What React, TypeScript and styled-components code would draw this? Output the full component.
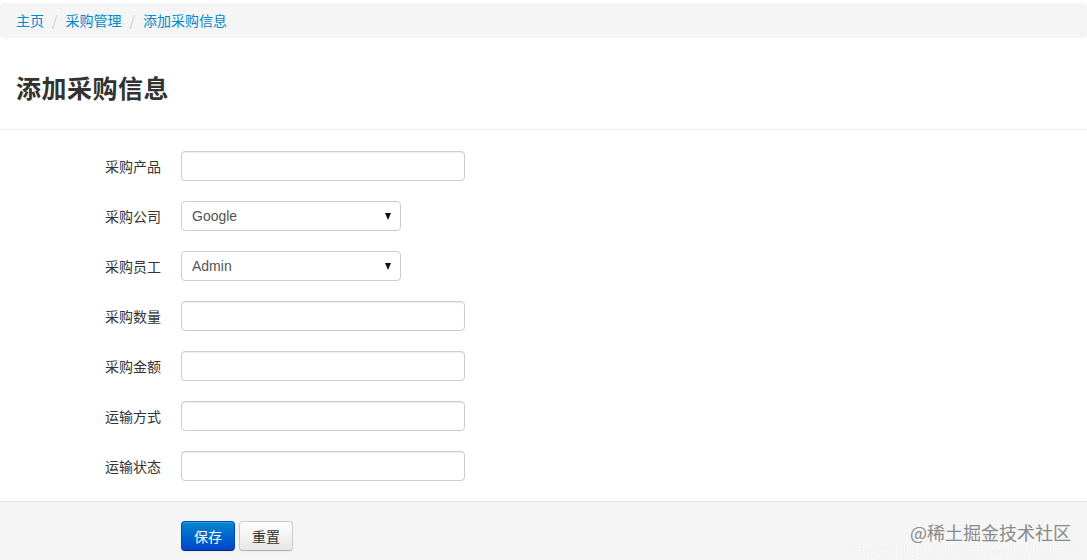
import styled, { createGlobalStyle } from "styled-components";

const GlobalStyle = createGlobalStyle`
  html, body {
    margin: 0;
    padding: 0;
    background: #fff;
    font-family: "Liberation Sans", Arial, "Noto Sans CJK SC", sans-serif;
    font-size: 14px;
    color: #333;
  }
`;

const fields = [
  { label: "采购产品", type: "text" },
  { label: "采购公司", type: "select", value: "Google" },
  { label: "采购员工", type: "select", value: "Admin" },
  { label: "采购数量", type: "text" },
  { label: "采购金额", type: "text" },
  { label: "运输方式", type: "text" },
  { label: "运输状态", type: "text" },
];

const App = () => {
  return (
    <Page>
      <GlobalStyle />
      <Breadcrumb>
        <Crumb>主页</Crumb>
        <Divider>/</Divider>
        <Crumb>采购管理</Crumb>
        <Divider>/</Divider>
        <Crumb>添加采购信息</Crumb>
      </Breadcrumb>
      <Header>
        <Title>添加采购信息</Title>
      </Header>
      <Form>
        {fields.map((f) => (
          <Row key={f.label}>
            <Label>{f.label}</Label>
            {f.type === "select" ? (
              <Select>
                <span>{f.value}</span>
                <Caret />
              </Select>
            ) : (
              <Input />
            )}
          </Row>
        ))}
        <Actions>
          <PrimaryButton>保存</PrimaryButton>
          <Button>重置</Button>
        </Actions>
      </Form>
      <Watermark>
        <Mark>@稀土掘金技术社区</Mark>
        <Url>https://blog.csdn.net/wwinwind520</Url>
      </Watermark>
    </Page>
  );
};

export default App;

const Page = styled.div`
  position: relative;
  width: 1087px;
  height: 560px;
  overflow: hidden;
  padding-top: 3px;
  box-sizing: border-box;
`;

const Breadcrumb = styled.div`
  display: flex;
  align-items: center;
  height: 35px;
  padding: 0 16px 1px;
  background: #f5f5f5;
  border-radius: 4px;
  font-family: "Noto Sans CJK SC", sans-serif;
  font-size: 14px;
  line-height: 1;
  box-sizing: border-box;
`;

const Crumb = styled.a`
  color: #0088cc;
  cursor: pointer;
`;

const Divider = styled.span`
  color: #ccc;
  padding: 0 8px;
`;

const Header = styled.div`
  height: 92px;
  border-bottom: 1px solid #eee;
  display: flex;
  align-items: center;
  padding-left: 16px;
  padding-top: 8px;
  box-sizing: border-box;
`;

const Title = styled.h1`
  margin: 0;
  font-family: "Noto Sans CJK SC", serif;
  font-size: 25px;
  font-weight: 600;
  color: #333;
  letter-spacing: 0.5px;
  line-height: 1;
`;

const Form = styled.form`
  display: flex;
  flex-direction: column;
  padding-top: 21px;
`;

const Row = styled.div`
  display: flex;
  align-items: center;
  height: 30px;
  margin-bottom: 20px;
`;

const Label = styled.label`
  width: 181px;
  padding-right: 20px;
  box-sizing: border-box;
  text-align: right;
  font-family: "Noto Sans CJK SC", sans-serif;
  font-size: 14px;
  color: #333;
`;

const Input = styled.div`
  width: 284px;
  height: 30px;
  box-sizing: border-box;
  border: 1px solid #ccc;
  border-radius: 4px;
  background: #fff;
  box-shadow: inset 0 1px 1px rgba(0, 0, 0, 0.075);
`;

const Select = styled.div`
  width: 220px;
  height: 30px;
  box-sizing: border-box;
  border: 1px solid #ccc;
  border-radius: 4px;
  background: #fff;
  display: flex;
  align-items: center;
  justify-content: space-between;
  padding: 0 9px 0 10px;
  font-family: "Liberation Sans", Arial, sans-serif;
  font-size: 14px;
  color: #555;
`;

const Caret = styled.span`
  width: 0;
  height: 0;
  border-left: 3.5px solid transparent;
  border-right: 3.5px solid transparent;
  border-top: 7px solid #111;
`;

const Actions = styled.div`
  height: 79px;
  border-top: 1px solid #e5e5e5;
  background: #f5f5f5;
  display: flex;
  align-items: flex-start;
  gap: 4px;
  padding: 19px 0 0 181px;
  box-sizing: border-box;
`;

const Button = styled.button`
  width: 54px;
  height: 30px;
  border: 1px solid #ccc;
  border-bottom-color: #b3b3b3;
  border-radius: 4px;
  background: linear-gradient(#ffffff, #e6e6e6);
  box-shadow: inset 0 1px 0 rgba(255, 255, 255, 0.2), 0 1px 2px rgba(0, 0, 0, 0.05);
  font-family: "Noto Sans CJK SC", sans-serif;
  font-size: 14px;
  color: #333;
  padding: 0;
`;

const PrimaryButton = styled(Button)`
  border-color: #0044cc #0044cc #002a80;
  background: linear-gradient(#0088cc, #0044cc);
  color: #fff;
`;

const Watermark = styled.div`
  position: absolute;
  right: 10px;
  bottom: 3px;
  display: flex;
  flex-direction: column;
  align-items: flex-end;
  pointer-events: none;
`;

const Mark = styled.span`
  font-family: "Noto Sans CJK SC", sans-serif;
  font-size: 18px;
  color: #8a8a8a;
  line-height: 20px;
  margin-right: 6px;
`;

const Url = styled.span`
  font-family: "Liberation Sans", Arial, sans-serif;
  font-size: 15px;
  color: rgba(255, 255, 255, 0.9);
  text-shadow: 0 0 1px rgba(0, 0, 0, 0.1);
  line-height: 15px;
`;
